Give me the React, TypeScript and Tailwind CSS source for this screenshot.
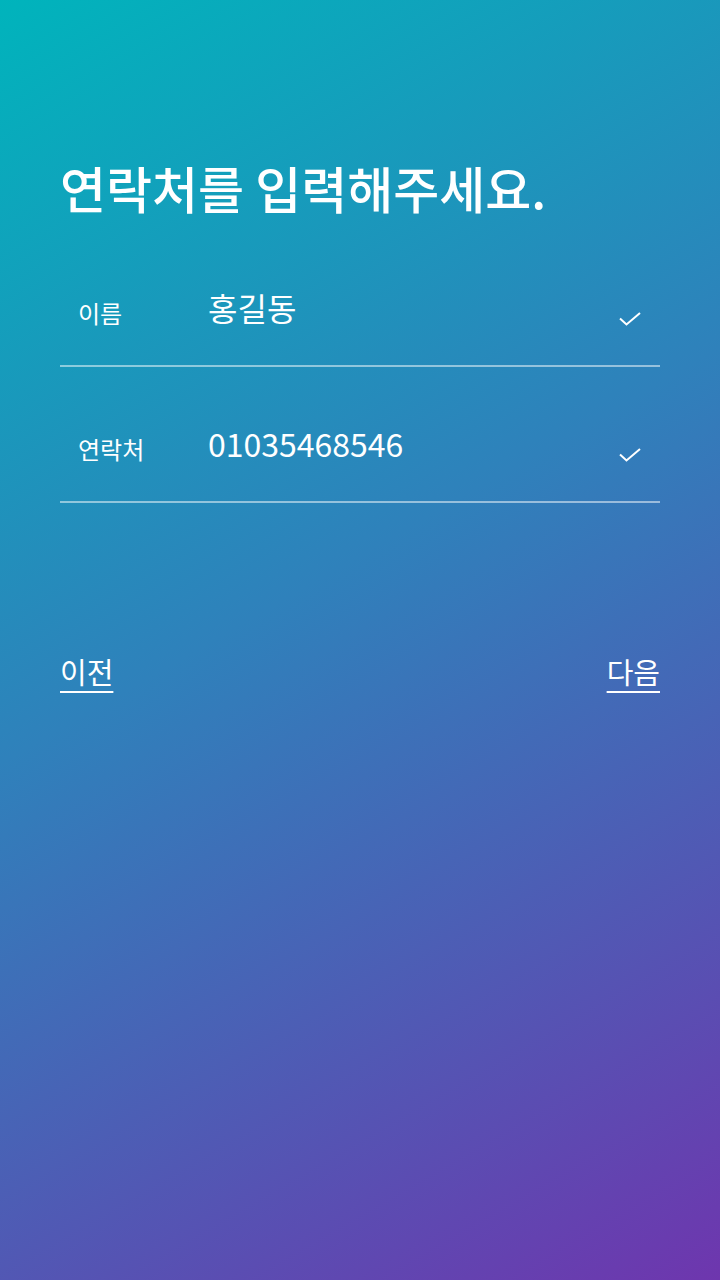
import { ReactNode } from 'react';

const font = { fontFamily: '"Noto Sans CJK KR", "Noto Sans", sans-serif' };

function Check() {
  return (
    <svg width="24" height="16" viewBox="0 0 24 16" fill="none" className="mt-3">
      <path d="M2 7.5 L8.5 13.5 L22 2" stroke="white" strokeWidth="2" />
    </svg>
  );
}

function Field({ label, children }: { label: string; children: ReactNode }) {
  return (
    <div className="flex h-[136px] items-center border-b-2 border-white/50 pt-[30px]">
      <div className="w-[148px] pl-[18px] text-[24px] text-white">{label}</div>
      <div className="flex-1 -mt-3 text-[32px] text-white">{children}</div>
      <div className="pr-[18px]">
        <Check />
      </div>
    </div>
  );
}

export default function App() {
  return (
    <div
      className="h-[1280px] w-[720px] bg-[linear-gradient(150deg,#00b4bc_0%,#2f81bb_45%,#6e36ae_100%)] px-[60px] pt-[150px]"
      style={font}
    >
      <h1 className="text-[50px] font-medium text-white">연락처를 입력해주세요.</h1>
      <div className="mt-[6px]">
        <Field label="이름">홍길동</Field>
        <Field label="연락처">01035468546</Field>
      </div>
      <div className="mt-[147px] flex justify-between text-[29px] text-white">
        <span className="underline underline-offset-[7px] decoration-2">이전</span>
        <span className="underline underline-offset-[7px] decoration-2">다음</span>
      </div>
    </div>
  );
}
